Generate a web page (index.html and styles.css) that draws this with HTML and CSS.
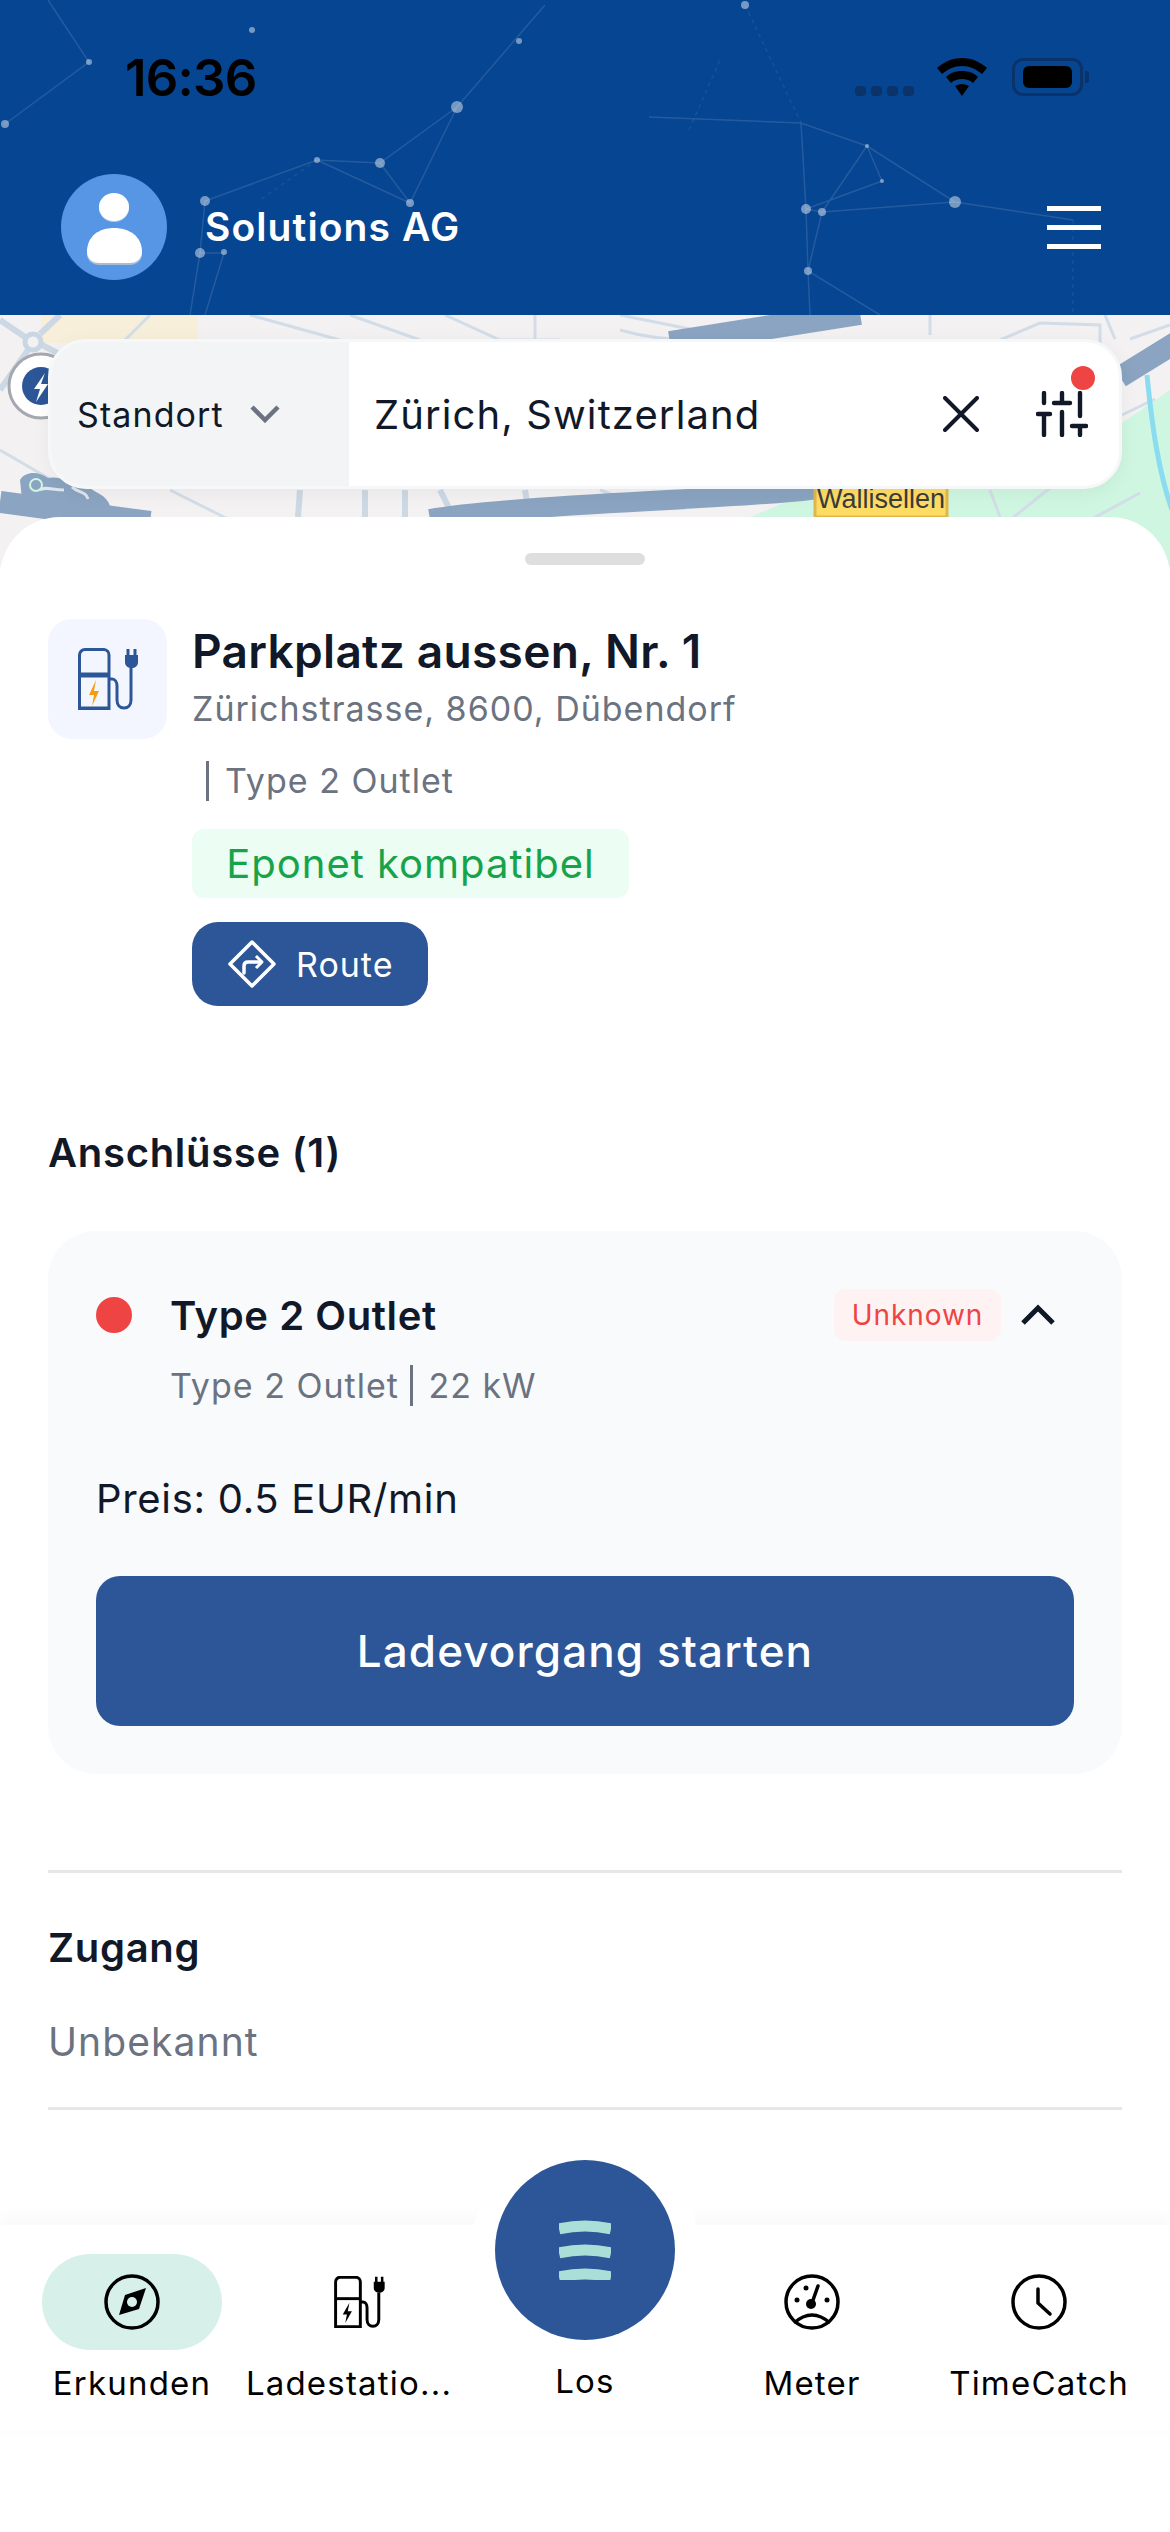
FILE: index.html

```html
<!DOCTYPE html>
<html lang="de">
<head>
    <meta charset="UTF-8">
    <meta name="viewport" content="width=device-width, initial-scale=1.0">
    <title>Parkplatz aussen, Nr. 1</title>
    <link rel="stylesheet" href="styles.css">
</head>
<body>
    <header class="top">
        <!-- star network behind the header -->
        <svg class="top-bg" viewBox="0 0 1170 315" fill="none">
            <g stroke="#fff" stroke-opacity=".12" stroke-width="1.5">
                <path d="M48 0 89 62 5 124M545 5 457 107 380 163 317 160 205 201 200 253 190 315M457 107 410 203 380 163M317 160 410 203M200 253h24L205 315"/>
                <path d="M649 117 801 123 867 146 955 202 822 212 806 209 801 123M867 146 882 181 806 209M867 146 822 212M955 202 1073 220M806 209 808 271 810 315M822 212 808 271 880 315"/>
            </g>
            <g stroke="#fff" stroke-opacity=".07" stroke-width="1.5" stroke-dasharray="4 4">
                <path d="M745 5 801 123M1073 220V315M317 160 260 200M689 130 720 60"/>
            </g>
            <g fill="#fff" fill-opacity=".45">
                <circle cx="89" cy="62" r="3"/><circle cx="5" cy="124" r="4"/><circle cx="252" cy="30" r="3"/>
                <circle cx="519" cy="41" r="3"/><circle cx="457" cy="107" r="6"/><circle cx="380" cy="163" r="5"/>
                <circle cx="317" cy="160" r="3"/><circle cx="410" cy="203" r="4"/><circle cx="205" cy="201" r="5"/>
                <circle cx="200" cy="253" r="5"/><circle cx="224" cy="252" r="3"/><circle cx="745" cy="5" r="4"/>
                <circle cx="867" cy="146" r="2"/><circle cx="882" cy="181" r="2"/><circle cx="955" cy="202" r="6"/>
                <circle cx="806" cy="209" r="5"/><circle cx="822" cy="212" r="4"/><circle cx="808" cy="271" r="4"/>
            </g>
        </svg>

        <div class="status">
            <span class="time">16:36</span>
            <div class="status-icons">
                <span class="signal"><i></i><i></i><i></i><i></i></span>
                <svg class="wifi" viewBox="0 0 50 38" fill="#000">
                    <path d="M25 0C15 0 7 4 0 10l5 6c6-5 12-8 20-8s14 3 20 8l5-6C43 4 35 0 25 0z"/>
                    <path d="M25 13c-7 0-12 2-16 6l5 6c3-3 7-4 11-4s8 1 11 4l5-6c-4-4-9-6-16-6z"/>
                    <path d="M25 26c-3 0-5 1-7 2l7 10 7-10c-2-1-4-2-7-2z"/>
                </svg>
                <span class="battery"><i></i></span>
            </div>
        </div>

        <div class="account">
            <svg class="avatar" viewBox="0 0 106 106">
                <circle cx="53" cy="53" r="53" fill="#5796e4"/>
                <ellipse cx="53" cy="34" rx="15" ry="14" fill="#b9cde6"/>
                <ellipse cx="53" cy="33" rx="15" ry="14" fill="#fff"/>
                <path d="M26 80C26 64 38 56 53 56S81 64 81 80C81 87 75 91 69 91H38C32 91 26 87 26 80z" fill="#a9bcd6"/>
                <path d="M26 78C26 62 38 54 53 54S81 62 81 78C81 85 75 89 69 89H38C32 89 26 85 26 78z" fill="#fff"/>
            </svg>
            <span class="company">Solutions AG</span>
            <span class="burger"><i></i><i></i><i></i></span>
        </div>
    </header>

    <section class="map">
        <!-- street map tiles, only the part above the sheet shows -->
        <svg class="map-bg" viewBox="0 0 1170 252" fill="none">
            <rect width="1170" height="252" fill="#f3f1f2"/>
            <path d="M41 0H198V28H41z" fill="#f7efd9"/>
            <path d="M746 204 860 155 1122 108 1170 75V252H746z" fill="#cff6e0"/>
            <g stroke="#d3dde8" stroke-width="3">
                <path d="M0 135 60 170 40 200M150 0 120 30M250 0 340 25M350 0 420 25M445 0 500 25 560 25M620 0 720 20"/>
                <path d="M535 0V30M620 15Q690 35 780 15M930 0V20M1000 25 1040 8 1100 10 1100 30M1105 0 1115 24M1170 10 1130 24"/>
                <path d="M1122 100 1155 84M1010 205 1060 165M1090 205 1140 178M990 175 1000 202M170 175 230 205M600 175 640 190"/>
            </g>
            <g stroke="#ccd8e4" stroke-width="6">
                <path d="M0 5 25 22M42 30 90 55M28 35 0 75M40 19 60 0M300 175 298 202M365 175V202M405 175V202M440 175 455 205M525 175 530 205"/>
            </g>
            <circle cx="33" cy="27" r="8" fill="#f3f1f2" stroke="#c9d6e3" stroke-width="5"/>
            <g stroke="#8aa4c1">
                <path d="M670 28 860-2" stroke-width="24"/>
                <path d="M1120 62 1180 25" stroke-width="22"/>
                <path d="M430 204Q480 195 650 186T830 172" stroke-width="20"/>
                <path d="M0 187 150 207" stroke-width="22"/>
            </g>
            <path d="M20 165c6-10 20-8 28-2 8-2 14 2 22 0 10 2 16 8 26 14 8 4 12 8 14 14l6 12H55L22 185z" fill="#8aa4c1"/>
            <path d="M72 172c6 6 14 4 16 12M40 175c6-4 12 0 24 0" stroke="#dfe6ee" stroke-width="3"/>
            <circle cx="36" cy="170" r="6" stroke="#cff6e0" stroke-width="2"/>
            <path d="M1147 60C1152 110 1158 155 1172 195" stroke="#8adcf0" stroke-width="5"/>
            <circle cx="41" cy="71" r="32" fill="#fff" stroke="#a5a8b0" stroke-width="3"/>
            <circle cx="41" cy="71" r="19" fill="#2c5697"/>
            <path d="M45 58 34 74h6l-4 13 12-18h-7z" fill="#fff"/>
            <rect x="815" y="165" width="132" height="37" fill="#fddc64" stroke="#e0b64e" stroke-width="3"/>
            <text class="map-label" x="881" y="193" text-anchor="middle">Wallisellen</text>
        </svg>

        <div class="search">
            <div class="search-type">
                <span>Standort</span>
                <svg class="chevron" viewBox="0 0 30 18" fill="none"><path d="M2 2 15 15 28 2" stroke="#6b7280" stroke-width="4.5"/></svg>
            </div>
            <div class="search-field">
                <span class="search-text">Zürich, Switzerland</span>
                <svg class="clear" viewBox="0 0 36 36" fill="none"><path d="M2 2 34 34M34 2 2 34" stroke="#111827" stroke-width="4" stroke-linecap="round"/></svg>
                <span class="filter">
                    <svg viewBox="0 0 52 46" fill="none" stroke="#111827" stroke-width="4.4" stroke-linecap="round">
                        <path d="M8 2V12M2 23H14M8 23V44M26 2V10M18 12H34M26 21V44M44 2V25M36 35H50M44 35V44"/>
                    </svg>
                    <i class="filter-dot"></i>
                </span>
            </div>
        </div>
    </section>

    <main class="sheet">
        <div class="handle"></div>

        <div class="station">
            <div class="station-icon">
                <svg viewBox="0 0 60 62" fill="none" stroke="#2c5697">
                    <path d="M1.5 60.500V7A5.500 5.500 0 0 1 7 1.500H26A5.500 5.500 0 0 1 31 7V60.500z" stroke-width="3"/>
                    <path d="M1.500 60.500H31" stroke-width="4"/>
                    <path d="M1.500 27H31" stroke-width="5"/>
                    <path d="M31 31h3c3 0 5 3 5 7v14c0 5 3 8 7 8s7-3 7-8V20" stroke-width="3"/>
                    <path d="M47 7h13v7c0 4-3 6-6.500 6S47 18 47 14z" fill="#2c5697" stroke="none"/>
                    <path d="M50 1V8M57 1V8" stroke-width="3"/>
                    <path d="M18 32 11 47h5l-2 11 7-15h-5z" fill="#f59e0b" stroke="none"/>
                </svg>
            </div>
            <div class="station-info">
                <h1 class="station-name">Parkplatz aussen, Nr. 1</h1>
                <p class="station-address">Zürichstrasse, 8600, Dübendorf</p>
                <p class="station-type"><span>Type 2 Outlet</span></p>
                <div class="compat">Eponet kompatibel</div>
                <button class="route">
                    <svg viewBox="0 0 48 48" fill="none" stroke="#fff" stroke-width="3.500" stroke-linejoin="round">
                        <path d="M24 2 46 24 24 46 2 24z"/>
                        <path d="M16 33V26c0-3 2-4 4-4h13" stroke-linecap="round"/>
                        <path d="M28 16l6 6-6 6" stroke-width="3"/>
                    </svg>
                    Route
                </button>
            </div>
        </div>

        <h2 class="section-title">Anschlüsse (1)</h2>
        <div class="connector">
            <div class="connector-head">
                <i class="dot"></i>
                <span class="connector-name">Type 2 Outlet</span>
                <span class="state">Unknown</span>
                <svg class="collapse" viewBox="0 0 36 22" fill="none"><path d="M3 19 18 4 33 19" stroke="#111827" stroke-width="5"/></svg>
            </div>
            <p class="connector-sub">Type 2 Outlet <span class="sep">22 kW</span></p>
            <p class="price">Preis: 0.5 EUR/min</p>
            <button class="start">Ladevorgang starten</button>
        </div>

        <div class="access">
            <h2 class="section-title access-title">Zugang</h2>
            <p class="access-value">Unbekannt</p>
        </div>
    </main>

    <nav class="tabs">
        <a class="tab active">
            <span class="tab-icon">
                <svg viewBox="0 0 56 56" fill="none">
                    <circle cx="28" cy="28" r="26" stroke="#000" stroke-width="3.500"/>
                    <path d="M42 14 35 35 15 41 21 21z" fill="#000"/>
                    <circle cx="28" cy="28" r="5" fill="#d8f0ea"/>
                </svg>
            </span>
            <span>Erkunden</span>
        </a>
        <a class="tab">
            <span class="tab-icon">
                <svg class="tab-station" viewBox="0 0 60 62" fill="none" stroke="#000">
                    <path d="M1.500 60.500V7A5.500 5.500 0 0 1 7 1.500H26A5.500 5.500 0 0 1 31 7V60.500z" stroke-width="3.500"/>
                    <path d="M1.500 27H31" stroke-width="3.500"/>
                    <path d="M31 31h3c3 0 5 3 5 7v14c0 5 3 8 7 8s7-3 7-8V20" stroke-width="3.500"/>
                    <path d="M47 7h13v7c0 4-3 6-6.500 6S47 18 47 14z" fill="#000" stroke="none"/>
                    <path d="M50 1V8M57 1V8" stroke-width="3"/>
                    <path d="M18 32 10 46h5l-2 10 8-14h-5z" fill="#000" stroke="none"/>
                </svg>
            </span>
            <span>Ladestatio...</span>
        </a>
        <a class="tab center">
            <span class="go">
                <svg viewBox="0 0 52 60" fill="none" stroke="#a9dfd6" stroke-width="11">
                    <path d="M0 9Q26 3 52 9M0 33Q26 27 52 33M0 57Q26 51 52 57"/>
                </svg>
            </span>
            <span>Los</span>
        </a>
        <a class="tab">
            <span class="tab-icon">
                <svg viewBox="0 0 56 56" fill="none">
                    <circle cx="28" cy="28" r="26" stroke="#000" stroke-width="3.500"/>
                    <path d="M10 49Q28 33 46 49" stroke="#000" stroke-width="3.500"/>
                    <path d="M34 12 28 29" stroke="#000" stroke-width="3.500" stroke-linecap="round"/>
                    <circle cx="27" cy="30" r="5" fill="#000"/>
                    <circle cx="13" cy="26" r="2.500" fill="#000"/><circle cx="22" cy="14" r="2.500" fill="#000"/><circle cx="43" cy="26" r="2.500" fill="#000"/>
                </svg>
            </span>
            <span>Meter</span>
        </a>
        <a class="tab">
            <span class="tab-icon">
                <svg viewBox="0 0 56 56" fill="none" stroke="#000" stroke-width="3.500">
                    <circle cx="28" cy="28" r="26"/>
                    <path d="M27 15V29L39 40" stroke-linecap="round" stroke-linejoin="round"/>
                </svg>
            </span>
            <span>TimeCatch</span>
        </a>
    </nav>
</body>
</html>
```

FILE: styles.css

```css
* { margin: 0; padding: 0; box-sizing: border-box; }
html, body { height: 100%; }
body {
    width: 1170px; height: 2532px; overflow: hidden;
    display: flex; flex-direction: column;
    font-family: Inter, "Noto Sans", sans-serif; color: #111827; background: #fff;
}
i { display: block; }
button { font-family: inherit; border: none; cursor: pointer; }

/* header */
.top { position: relative; height: 315px; background: #064592; flex: none; }
.top-bg { position: absolute; left: 0; top: 0; width: 1170px; height: 315px; }
.status {
    position: relative; height: 156px; padding: 49px 80px 0 125px;
    display: flex; justify-content: space-between; align-items: flex-start;
}
.time { font-size: 51px; line-height: 58px; font-weight: 600; color: #000; letter-spacing: -.8px; }
.status-icons { display: flex; align-items: flex-start; margin-top: 9px; margin-right: 7px; }
.signal { display: flex; gap: 5px; margin-top: 28px; margin-right: 23px; }
.signal i { width: 11px; height: 10px; border-radius: 4px; background: #0b3269; }
.wifi { width: 50px; height: 38px; margin-right: 25px; }
.battery {
    position: relative; display: block; width: 71px; height: 38px; padding: 5px 8px;
    border: 3px solid #0b3269; border-radius: 11px;
}
.battery i { width: 49px; height: 22px; background: #000; border-radius: 6px; }
.battery::after {
    content: ""; position: absolute; right: -9px; top: 10px;
    width: 4px; height: 12px; border-radius: 0 3px 3px 0; background: #0b3269;
}
.account { position: relative; display: flex; align-items: center; padding: 18px 69px 0 61px; }
.avatar { width: 106px; height: 106px; flex: none; }
.company { margin-left: 38px; font-size: 39px; line-height: 48px; font-weight: 600; color: #fff; flex: 1; letter-spacing: 1.1px; }
.burger { width: 54px; display: flex; flex-direction: column; gap: 14px; }
.burger i { height: 5px; background: #fff; }

/* map and search */
.map { position: relative; height: 252px; padding: 24px 48px 0; flex: none; }
.map-bg { position: absolute; left: 0; top: 0; width: 1170px; height: 252px; }
.map-label { font-family: "Liberation Sans", sans-serif; font-size: 27px; fill: #3b3b3b; }
.search {
    position: relative; height: 150px; display: flex; background: #fff;
    border: 3px solid #f6f7f9; border-radius: 38px; overflow: hidden;
    box-shadow: 0 4px 20px rgba(0, 0, 0, .05);
}
.search-type {
    width: 298px; flex: none; background: #f3f4f6; padding: 0 0 0 26px;
    display: flex; align-items: center; gap: 26px;
    font-size: 34px; letter-spacing: 1.1px;
}
.chevron { width: 30px; height: 18px; }
.search-field { flex: 1; display: flex; align-items: center; padding: 0 0 0 25px; }
.search-text { flex: 1; font-size: 40px; letter-spacing: 1.1px; }
.clear { width: 36px; height: 36px; margin-right: 57px; }
.filter { position: relative; display: block; width: 52px; height: 46px; margin-right: 31px; }
.filter svg { display: block; width: 52px; height: 46px; }
.filter-dot {
    position: absolute; right: -7px; top: -25px;
    width: 24px; height: 24px; border-radius: 50%; background: #ef4444;
}

/* bottom sheet */
.sheet {
    position: relative; flex: 1; margin-top: -50px; padding: 36px 48px 0;
    background: #fff; border-radius: 60px 60px 0 0;
}
.handle { width: 120px; height: 12px; margin: 0 auto 54px; background: #dedede; border-radius: 6px; }
.station { display: flex; gap: 25px; align-items: flex-start; }
.station-icon {
    width: 119px; height: 120px; flex: none; background: #f3f6fe; border-radius: 24px;
    display: flex; align-items: center; justify-content: center;
}
.station-icon svg { width: 60px; height: 62px; }
.station-info { padding-top: 2px; }
.station-name { font-size: 46px; line-height: 60px; font-weight: 600; letter-spacing: .3px; }
.station-address { margin-top: 8px; font-size: 34px; line-height: 40px; color: #6b7280; letter-spacing: 1px; }
.station-type { margin-top: 32px; margin-left: 14px; font-size: 34px; line-height: 40px; color: #6b7280; letter-spacing: 1px; }
.station-type span { display: block; border-left: 3px solid #6b7280; padding-left: 16px; }
.compat {
    width: 437px; height: 69px; margin-top: 28px; background: #ecfdf3; border-radius: 12px;
    font-size: 40px; line-height: 69px; color: #16a34a; text-align: center; letter-spacing: 1px;
}
.route {
    width: 236px; height: 84px; margin-top: 24px; background: #2c5697; color: #fff; border-radius: 26px;
    display: flex; align-items: center; gap: 20px; padding-left: 36px;
    font-size: 34px; letter-spacing: 1px;
}
.route svg { width: 48px; height: 48px; flex: none; }

.section-title { font-size: 40px; line-height: 48px; font-weight: 600; letter-spacing: .7px; margin-top: 123px; }
.connector { margin-top: 54px; height: 543px; padding: 58px 48px 0; background: #f9fafb; border-radius: 48px; }
.connector-head { display: flex; align-items: center; height: 52px; }
.dot { width: 36px; height: 36px; border-radius: 50%; background: #ef4444; margin-right: 38px; }
.connector-name { flex: 1; font-size: 40px; font-weight: 600; letter-spacing: .6px; }
.state {
    width: 167px; height: 52px; background: #fef2f2; border-radius: 12px;
    font-size: 28px; line-height: 52px; color: #ef4444; text-align: center; letter-spacing: .9px;
}
.collapse { width: 36px; height: 22px; margin-left: 19px; margin-right: 18px; }
.connector-sub { margin: 25px 0 0 74px; font-size: 34px; line-height: 40px; color: #6b7280; letter-spacing: 1px; }
.sep { border-left: 3px solid #6b7280; padding-left: 15px; margin-left: 1px; }
.price { margin-top: 69px; font-size: 40px; line-height: 48px; letter-spacing: .7px; }
.start {
    display: block; width: 100%; height: 150px; margin-top: 53px;
    background: #2c5697; color: #fff; border-radius: 24px;
    font-size: 44px; font-weight: 500; letter-spacing: 1.1px;
}
.access { margin-top: 96px; border-top: 3px solid #e5e7eb; border-bottom: 3px solid #e5e7eb; padding: 51px 0 41px; }
.access-title { margin-top: 0; }
.access-value { margin-top: 46px; font-size: 39px; line-height: 48px; color: #6b7280; letter-spacing: 1.1px; }

/* tab bar */
.tabs {
    position: relative; height: 307px; flex: none; padding: 29px 0 0 20px;
    display: grid; grid-template-columns: 224px 210px 262px 192px 262px; align-items: start;
    background: #fff; box-shadow: 0 -10px 14px rgba(0, 0, 0, .025);
}
.tabs::after {
    content: ""; position: absolute; left: 0; right: 0; top: 205px; height: 8px;
    background: linear-gradient(#fcfcfc, #fff);
}
.tab {
    display: flex; flex-direction: column; align-items: center;
    font-size: 33px; line-height: 40px; color: #000; letter-spacing: 1.2px; white-space: nowrap;
}
.tab-icon {
    width: 180px; height: 96px; margin-bottom: 13px; border-radius: 48px;
    display: flex; align-items: center; justify-content: center;
}
.tab-icon svg { width: 56px; height: 56px; }
.tab-icon .tab-station { width: 51px; height: 52px; margin-left: 20px; }
.active .tab-icon { background: #d8f0ea; }
.go {
    width: 180px; height: 180px; margin-top: -94px; margin-bottom: 21px; border-radius: 50%;
    background: #2c5697; box-shadow: 0 0 0 24px #fff;
    display: flex; align-items: center; justify-content: center;
}
.go svg { width: 52px; height: 60px; }
```
